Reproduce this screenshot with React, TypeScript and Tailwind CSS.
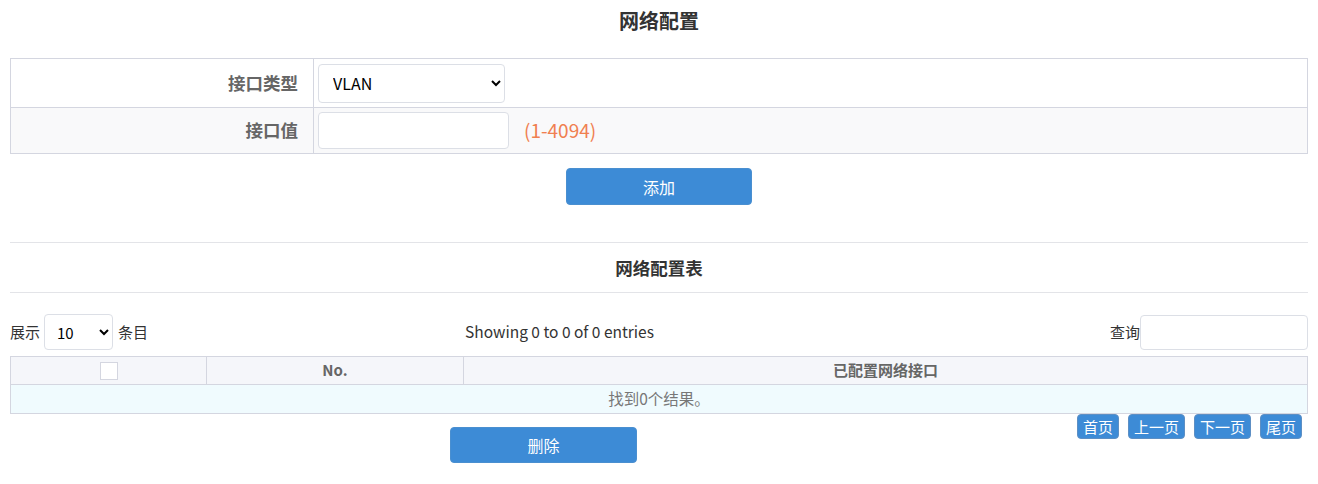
import { useState } from 'react';

const font = "font-['Microsoft_YaHei','Noto_Sans_CJK_SC',sans-serif]";

const pages = ['首页', '上一页', '下一页', '尾页'];

const App = () => {
  const [type, setType] = useState('VLAN');
  const [size, setSize] = useState('10');

  return (
    <div className={`${font} bg-white px-[10px] min-h-[484px] text-[#333]`}>
      <h1 className="pt-[8px] text-center text-[20px] leading-[26px] font-bold text-[#333]">网络配置</h1>

      {/* Form */}
      <table className="mt-[24px] w-full border-collapse border border-[#d4d6e0]">
        <tbody>
          <tr className="h-[49px] bg-white">
            <th className="w-[303px] border border-[#d4d6e0] pr-[15px] text-right text-[17.5px] font-bold text-[#666]">接口类型</th>
            <td className="border border-[#d4d6e0] pl-[4px]">
              <select
                value={type}
                onChange={(e) => setType(e.target.value)}
                className="h-[39px] w-[187px] rounded-[4px] border border-[#dcdfe6] bg-white pl-[10px] text-[16px] text-black"
              >
                <option>VLAN</option>
              </select>
            </td>
          </tr>
          <tr className="h-[46px] bg-[#f9f9fa]">
            <th className="border border-[#d4d6e0] pr-[15px] text-right text-[17.5px] font-bold text-[#666]">接口值</th>
            <td className="border border-[#d4d6e0] pl-[4px]">
              <div className="flex items-center gap-[15px]">
                <input className="h-[37px] w-[191px] rounded-[4px] border border-[#dcdfe6] bg-white px-2 text-[16px]" />
                <span className="text-[19px] text-[#f08050]">(1-4094)</span>
              </div>
            </td>
          </tr>
        </tbody>
      </table>

      <div className="mt-[14px] flex justify-center">
        <button className="h-[37px] w-[186px] rounded-[4px] border border-[#4a8fd0] bg-[#3d8bd6] text-[16px] text-white">添加</button>
      </div>

      <div className="mt-[37px] border-t border-[#e3e4e8]" />
      <h2 className="py-[15px] text-center text-[17.5px] leading-[19px] font-bold text-[#333]">网络配置表</h2>
      <div className="border-t border-[#e3e4e8]" />

      {/* Toolbar */}
      <div className="mt-[21px] flex h-[36px] items-center text-[15px] text-[#333]">
        <div className="flex w-[455px] items-center">
          <span>展示</span>
          <select
            value={size}
            onChange={(e) => setSize(e.target.value)}
            className="ml-[4px] mr-[5px] h-[36px] w-[69px] rounded-[4px] border border-[#dcdfe6] bg-white pl-[8px] text-[15px] text-black"
          >
            <option>10</option>
            <option>25</option>
            <option>50</option>
          </select>
          <span>条目</span>
        </div>
        <span className="text-[15.5px]">Showing 0 to 0 of 0 entries</span>
        <div className="ml-auto flex items-center">
          <span>查询</span>
          <input className="h-[35px] w-[168px] rounded-[4px] border border-[#dcdfe6] bg-white px-2" />
        </div>
      </div>

      {/* Table */}
      <table className="mt-[6px] w-full border-collapse border border-[#d4d6e0]">
        <thead>
          <tr className="h-[28px] bg-[#f5f6fa] text-[15px] text-[#666]">
            <th className="w-[196px] border border-[#d4d6e0]">
              <div className="mx-auto h-[18px] w-[18px] border border-[#d4d6e0] bg-white" />
            </th>
            <th className="w-[257px] border border-[#d4d6e0] font-bold">No.</th>
            <th className="border border-[#d4d6e0] font-bold">已配置网络接口</th>
          </tr>
        </thead>
        <tbody>
          <tr className="h-[29px] bg-[#f0fbfe]">
            <td colSpan={3} className="text-center text-[15.5px] text-[#777]">找到0个结果。</td>
          </tr>
        </tbody>
      </table>

      <div className="flex items-start">
        <div className="flex flex-1 justify-center pt-[13px]">
          <button className="h-[36px] w-[187px] rounded-[4px] border border-[#4a8fd0] bg-[#3d8bd6] text-[16px] text-white">删除</button>
        </div>
        <div className="mr-[6px] flex gap-[9px]">
          {pages.map((p) => (
            <button
              key={p}
              className="h-[25px] rounded-[4px] border border-[#5d8fc4] bg-[#3d8bd6] px-[5px] text-[15px] leading-[23px] text-white"
            >
              {p}
            </button>
          ))}
        </div>
      </div>
    </div>
  );
};

export default App;
